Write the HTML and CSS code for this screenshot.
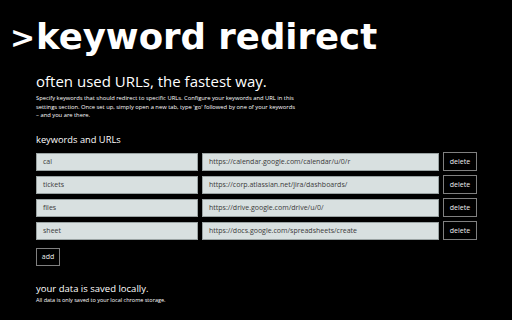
FILE: index.html
```html
<!DOCTYPE html>
<html>
<head>
<meta charset="utf-8">
<link rel="stylesheet" href="styles.css">
</head>
<body>
<main class="page">
  <h1 class="title"><span class="prompt">&gt;</span>keyword redirect</h1>
  <h2 class="subtitle">often used URLs, the fastest way.</h2>
  <p class="intro">Specify keywords that should redirect to specific URLs. Configure your keywords and URL in this settings section. Once set up, simply open a new tab, type 'go' followed by one of your keywords – and you are there.</p>
  <h3 class="section-title">keywords and URLs</h3>
  <div class="rows">
    <div class="row">
      <div class="field keyword">cal</div>
      <div class="field url">https://calendar.google.com/calendar/u/0/r</div>
      <div class="btn">delete</div>
    </div>
    <div class="row">
      <div class="field keyword">tickets</div>
      <div class="field url">https://corp.atlassian.net/jira/dashboards/</div>
      <div class="btn">delete</div>
    </div>
    <div class="row">
      <div class="field keyword">files</div>
      <div class="field url">https://drive.google.com/drive/u/0/</div>
      <div class="btn">delete</div>
    </div>
    <div class="row">
      <div class="field keyword">sheet</div>
      <div class="field url">https://docs.google.com/spreadsheets/create</div>
      <div class="btn">delete</div>
    </div>
  </div>
  <div class="btn add">add</div>
  <h3 class="section-title saved">your data is saved locally.</h3>
  <p class="note">All data is only saved to your local chrome storage.</p>
</main>
</body>
</html>
```

FILE: styles.css
```css
html, body {
  margin: 0;
  padding: 0;
  background: #000;
  color: #fff;
}
.page {
  width: 512px;
  height: 320px;
  box-sizing: border-box;
  padding: 19px 0 0 36px;
  font-family: "Open Sans", "DejaVu Sans", sans-serif;
  overflow: hidden;
}
.title {
  margin: 0;
  font-family: "DejaVu Sans", sans-serif;
  font-weight: bold;
  font-size: 35.5px;
  line-height: 35px;
  white-space: nowrap;
}
.prompt {
  display: inline-block;
  width: 26px;
  margin-left: -26px;
  font-size: 30px;
  vertical-align: 1px;
}
.subtitle {
  margin: 18px 0 0 0;
  font-weight: normal;
  font-size: 15px;
  line-height: 17px;
}
.intro {
  margin: 4px 0 0 0;
  width: 262px;
  font-size: 5.8px;
  line-height: 8.5px;
}
.section-title {
  margin: 14px 0 0 0;
  font-weight: normal;
  font-size: 9.3px;
  line-height: 12px;
}
.rows {
  margin-top: 7px;
  display: flex;
  flex-direction: column;
  gap: 5px;
}
.row {
  display: flex;
  gap: 4px;
  height: 18px;
}
.field {
  box-sizing: border-box;
  background: #d8e0e0;
  border: 1px solid #9aa3a3;
  color: #3a3a3a;
  font-size: 7px;
  line-height: 16px;
  padding-left: 6px;
  white-space: nowrap;
  overflow: hidden;
}
.keyword { width: 162px; }
.url { width: 237px; }
.btn {
  box-sizing: border-box;
  width: 34px;
  height: 19px;
  margin-top: -1px;
  border: 1px solid #808080;
  color: #f0f0f0;
  font-size: 7px;
  line-height: 17px;
  text-align: center;
}
.add {
  width: 24px;
  height: 18px;
  line-height: 16px;
  margin-top: 8px;
}
.saved {
  margin-top: 17px;
  font-size: 9.5px;
}
.note {
  margin: 0;
  font-size: 5.5px;
  line-height: 10px;
}
```
